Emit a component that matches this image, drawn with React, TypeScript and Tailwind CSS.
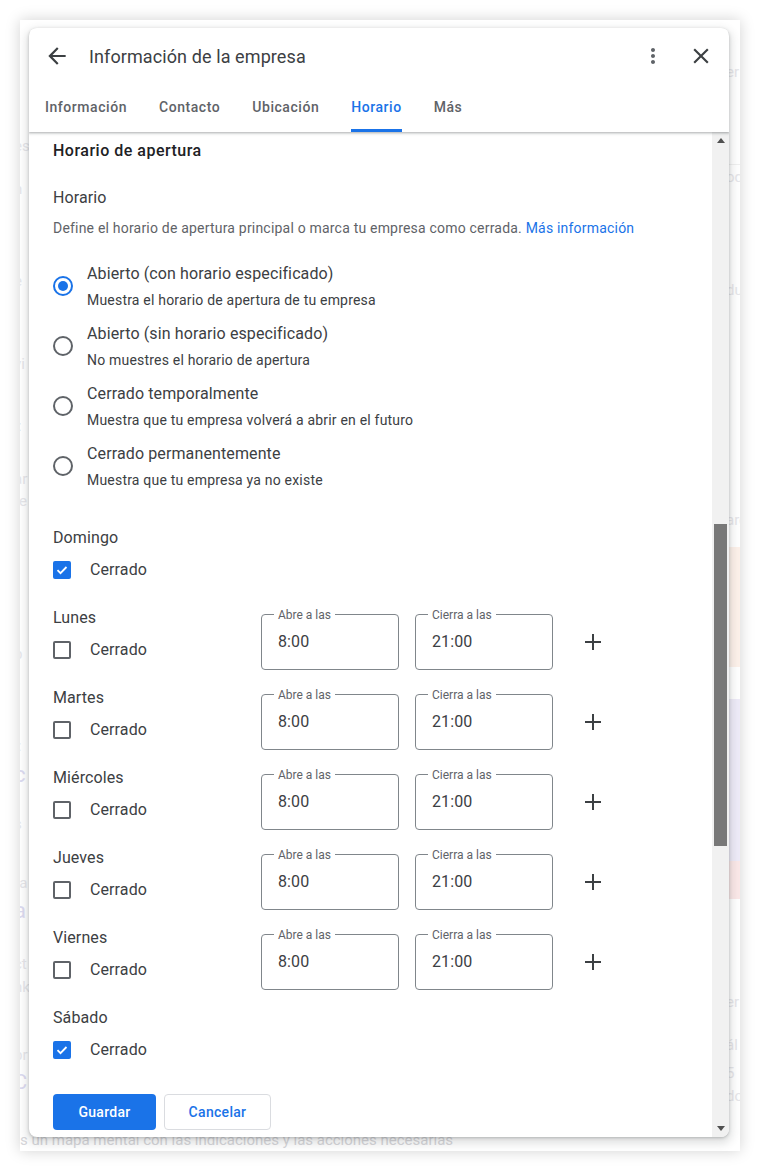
import React from 'react';

type Day = { name: string; closed: boolean };

const days: Day[] = [
  { name: 'Domingo', closed: true },
  { name: 'Lunes', closed: false },
  { name: 'Martes', closed: false },
  { name: 'Miércoles', closed: false },
  { name: 'Jueves', closed: false },
  { name: 'Viernes', closed: false },
  { name: 'Sábado', closed: true },
];

const options = [
  { title: 'Abierto (con horario especificado)', desc: 'Muestra el horario de apertura de tu empresa' },
  { title: 'Abierto (sin horario especificado)', desc: 'No muestres el horario de apertura' },
  { title: 'Cerrado temporalmente', desc: 'Muestra que tu empresa volverá a abrir en el futuro' },
  { title: 'Cerrado permanentemente', desc: 'Muestra que tu empresa ya no existe' },
];

const tabs = ['Información', 'Contacto', 'Ubicación', 'Horario', 'Más'];

const Icon = ({ d, size = 24, className = '' }: { d: string; size?: number; className?: string }) => (
  <svg width={size} height={size} viewBox="0 0 24 24" className={className} fill="currentColor">
    <path d={d} />
  </svg>
);

const Radio = ({ checked }: { checked: boolean }) => (
  <div
    className={`w-5 h-5 rounded-full border-2 flex items-center justify-center shrink-0 ${
      checked ? 'border-[#1a73e8]' : 'border-[#5f6368]'
    }`}
  >
    {checked && <div className="w-[10px] h-[10px] rounded-full bg-[#1a73e8]" />}
  </div>
);

const Checkbox = ({ checked }: { checked: boolean }) =>
  checked ? (
    <div className="w-[18px] h-[18px] rounded-[2px] bg-[#1a73e8] flex items-center justify-center shrink-0">
      <svg width="14" height="14" viewBox="0 0 14 14" fill="none">
        <path d="M2.5 7.2l3 3 6-6.2" stroke="white" strokeWidth="1.8" />
      </svg>
    </div>
  ) : (
    <div className="w-[18px] h-[18px] rounded-[2px] border-2 border-[#5f6368] shrink-0" />
  );

const TimeField = ({ label, value }: { label: string; value: string }) => (
  <div className="relative w-[138px] h-14 border border-[#80868b] rounded-[4px] flex items-center pl-4">
    <span className="absolute left-3 top-0 -translate-y-1/2 bg-white px-1 text-[12px] leading-4 text-[#5f6368]">
      {label}
    </span>
    <span className="text-base tracking-[0.1px] text-[#3c4043]">{value}</span>
  </div>
);

const Plus = () => (
  <svg width="18" height="18" viewBox="0 0 18 18" className="text-[#3c4043]">
    <path d="M9 1v16M1 9h16" stroke="currentColor" strokeWidth="2" />
  </svg>
);

const Background = () => (
  <div className="flex h-full text-[#e6e6ea]">
    <div className="flex-1 flex flex-col text-[15px]">
      <div className="mt-[115px] -ml-[6px]">esta información</div>
      <div className="mt-[20px] -ml-[6px]">n</div>
      <div className="mt-[70px] -ml-[6px]">e</div>
      <div className="mt-[60px] -ml-[6px]">vi</div>
      <div className="mt-[40px] -ml-[6px] text-[#dcdcdc]">::</div>
      <div className="mt-[30px] -ml-[6px]">ar</div>
      <div className="-ml-[6px]">te</div>
      <div className="mt-[130px] -ml-[6px]">p</div>
      <div className="mt-[70px] -ml-[6px]">::</div>
      <div className="-ml-[6px] text-[22px] text-[#dcdaf0]">c</div>
      <div className="-ml-[6px]">r</div>
      <div className="-ml-[6px]">s</div>
      <div className="mt-[36px] -ml-[6px]">fa</div>
      <div className="-ml-[6px] text-[22px] text-[#dcdaf0]">a</div>
      <div className="mt-[26px] -ml-[6px]">ct</div>
      <div className="-ml-[6px]">nk</div>
      <div className="mt-[46px] -ml-[6px]">pr</div>
      <div className="-ml-[6px] text-[20px] text-[#dcdaf0]">C</div>
      <div className="mt-auto text-[#d6d6da]">s un mapa mental con las indicaciones y las acciones necesarias</div>
    </div>
    <div className="w-[160px] flex flex-col pl-[146px] text-[15px]">
      <div className="mt-[41px]">er</div>
      <div className="mt-[80px] border-t border-[#f0f0f0] pt-[1px]">od</div>
      <div className="mt-[91px]">du</div>
      <div className="mt-[207px]">arg</div>
      <div className="mt-[16px] h-[120px] bg-[#fdf1ea]" />
      <div className="mt-[32px] h-[162px] bg-[#eeebf8]" />
      <div className="h-[38px] bg-[#fbe8e8]" />
      <div className="mt-[92px]">er</div>
      <div className="mt-[20px]">ál</div>
      <div className="mt-[6px]">5</div>
      <div>do</div>
    </div>
  </div>
);

export default function App() {
  return (
    <div className="min-h-[1171px] bg-white p-5 font-['Roboto',sans-serif]">
      <div className="relative w-[720px] h-[1131px] bg-white overflow-hidden shadow-[0_0_14px_rgba(0,0,0,0.18)]">
        <Background />

        {/* Dialog */}
        <div className="absolute left-[9px] top-2 w-[700px] h-[1109px] bg-white rounded-lg overflow-hidden flex flex-col shadow-[0_1px_3px_rgba(60,64,67,0.3),0_4px_8px_3px_rgba(60,64,67,0.15)]">
          {/* Header */}
          <div className="relative z-10 bg-white shadow-[0_1px_2px_rgba(60,64,67,0.3),0_1px_3px_1px_rgba(60,64,67,0.12)]">
            <div className="h-14 flex items-center pl-4 pr-4 text-[#3c4043]">
              <Icon d="M20 11H7.83l5.59-5.59L12 4l-8 8 8 8 1.41-1.41L7.83 13H20v-2z" size={26} className="-ml-[1px]" />
              <h1 className="ml-[19px] text-[18px] tracking-[0.1px] text-[#3c4043] flex-1">Información de la empresa</h1>
              <Icon
                d="M12 8c1.1 0 2-.9 2-2s-.9-2-2-2-2 .9-2 2 .9 2 2 2zm0 2c-1.1 0-2 .9-2 2s.9 2 2 2 2-.9 2-2-.9-2-2-2zm0 6c-1.1 0-2 .9-2 2s.9 2 2 2 2-.9 2-2-.9-2-2-2z"
                className="text-[#5f6368] ml-1"
              />
              <Icon
                d="M19 6.41L17.59 5 12 10.59 6.41 5 5 6.41 10.59 12 5 17.59 6.41 19 12 13.41 17.59 19 19 17.59 13.41 12z"
                size={26}
                className="ml-[23px] -mr-[1px]"
              />
            </div>
            <div className="h-12 flex">
              {tabs.map((t) => (
                <div key={t} className="px-4 h-full">
                  <div
                    className={`h-full flex items-center border-b-[3px] text-sm font-medium tracking-[0.55px] ${
                      t === 'Horario' ? 'border-[#1a73e8] text-[#1a73e8]' : 'border-transparent text-[#5f6368]'
                    }`}
                  >
                    {t}
                  </div>
                </div>
              ))}
            </div>
          </div>

          {/* Body */}
          <div className="flex flex-1 min-h-0">
            <div className="flex-1 overflow-hidden pl-6 pt-[9px]">
              <h2 className="text-base leading-5 font-medium tracking-[0.5px] text-[#202124]">Horario de apertura</h2>
              <h3 className="mt-[25px] text-base leading-6 tracking-[0.1px] text-[#3c4043]">Horario</h3>
              <p className="mt-2 text-sm leading-5 tracking-[0.2px] text-[#5f6368]">
                Define el horario de apertura principal o marca tu empresa como cerrada.{' '}
                <span className="text-[#1a73e8]">Más información</span>
              </p>

              <div className="mt-6 flex flex-col gap-3">
                {options.map((o, i) => (
                  <div key={o.title} className="flex items-center gap-[14px] h-12">
                    <Radio checked={i === 0} />
                    <div className="flex flex-col">
                      <span className="text-base leading-6 tracking-[0.12px] text-[#3c4043]">{o.title}</span>
                      <span className="mt-1 text-sm leading-5 tracking-[0.2px] text-[#3c4043]">{o.desc}</span>
                    </div>
                  </div>
                ))}
              </div>

              <div className="mt-9 flex flex-col">
                {days.map((d) => (
                  <div key={d.name} className="flex h-20">
                    <div className="w-[208px] flex flex-col">
                      <span className="h-6 leading-6 text-base tracking-[0.1px] text-[#3c4043]">{d.name}</span>
                      <div className="h-10 flex items-center gap-[19px]">
                        <Checkbox checked={d.closed} />
                        <span className="text-base tracking-[0.1px] text-[#3c4043]">Cerrado</span>
                      </div>
                    </div>
                    {!d.closed && (
                      <div className="pt-2 flex items-start">
                        <div className="flex items-center gap-4 h-14">
                          <TimeField label="Abre a las" value="8:00" />
                          <TimeField label="Cierra a las" value="21:00" />
                          <div className="ml-[15px]">
                            <Plus />
                          </div>
                        </div>
                      </div>
                    )}
                  </div>
                ))}
              </div>

              <div className="mt-2 flex gap-2">
                <button className="h-9 w-[103px] rounded-[4px] bg-[#1a73e8] text-white text-sm font-medium tracking-[0.3px]">
                  Guardar
                </button>
                <button className="h-9 w-[107px] rounded-[4px] border border-[#dadce0] bg-white text-[#1a73e8] text-sm font-medium tracking-[0.3px]">
                  Cancelar
                </button>
              </div>
              <div className="h-10" />
            </div>

            {/* Scrollbar */}
            <div className="w-[17px] bg-[#f1f1f1] flex flex-col items-center">
              <div className="h-[17px] flex items-center justify-center">
                <svg width="8" height="5" viewBox="0 0 8 5">
                  <path d="M0 5L4 0l4 5z" fill="#505050" />
                </svg>
              </div>
              <div className="mt-[375px] w-[13px] h-[322px] bg-[#787878]" />
              <div className="flex-1" />
              <div className="h-[17px] flex items-center justify-center">
                <svg width="8" height="5" viewBox="0 0 8 5">
                  <path d="M0 0l4 5 4-5z" fill="#505050" />
                </svg>
              </div>
            </div>
          </div>
        </div>
      </div>
    </div>
  );
}
